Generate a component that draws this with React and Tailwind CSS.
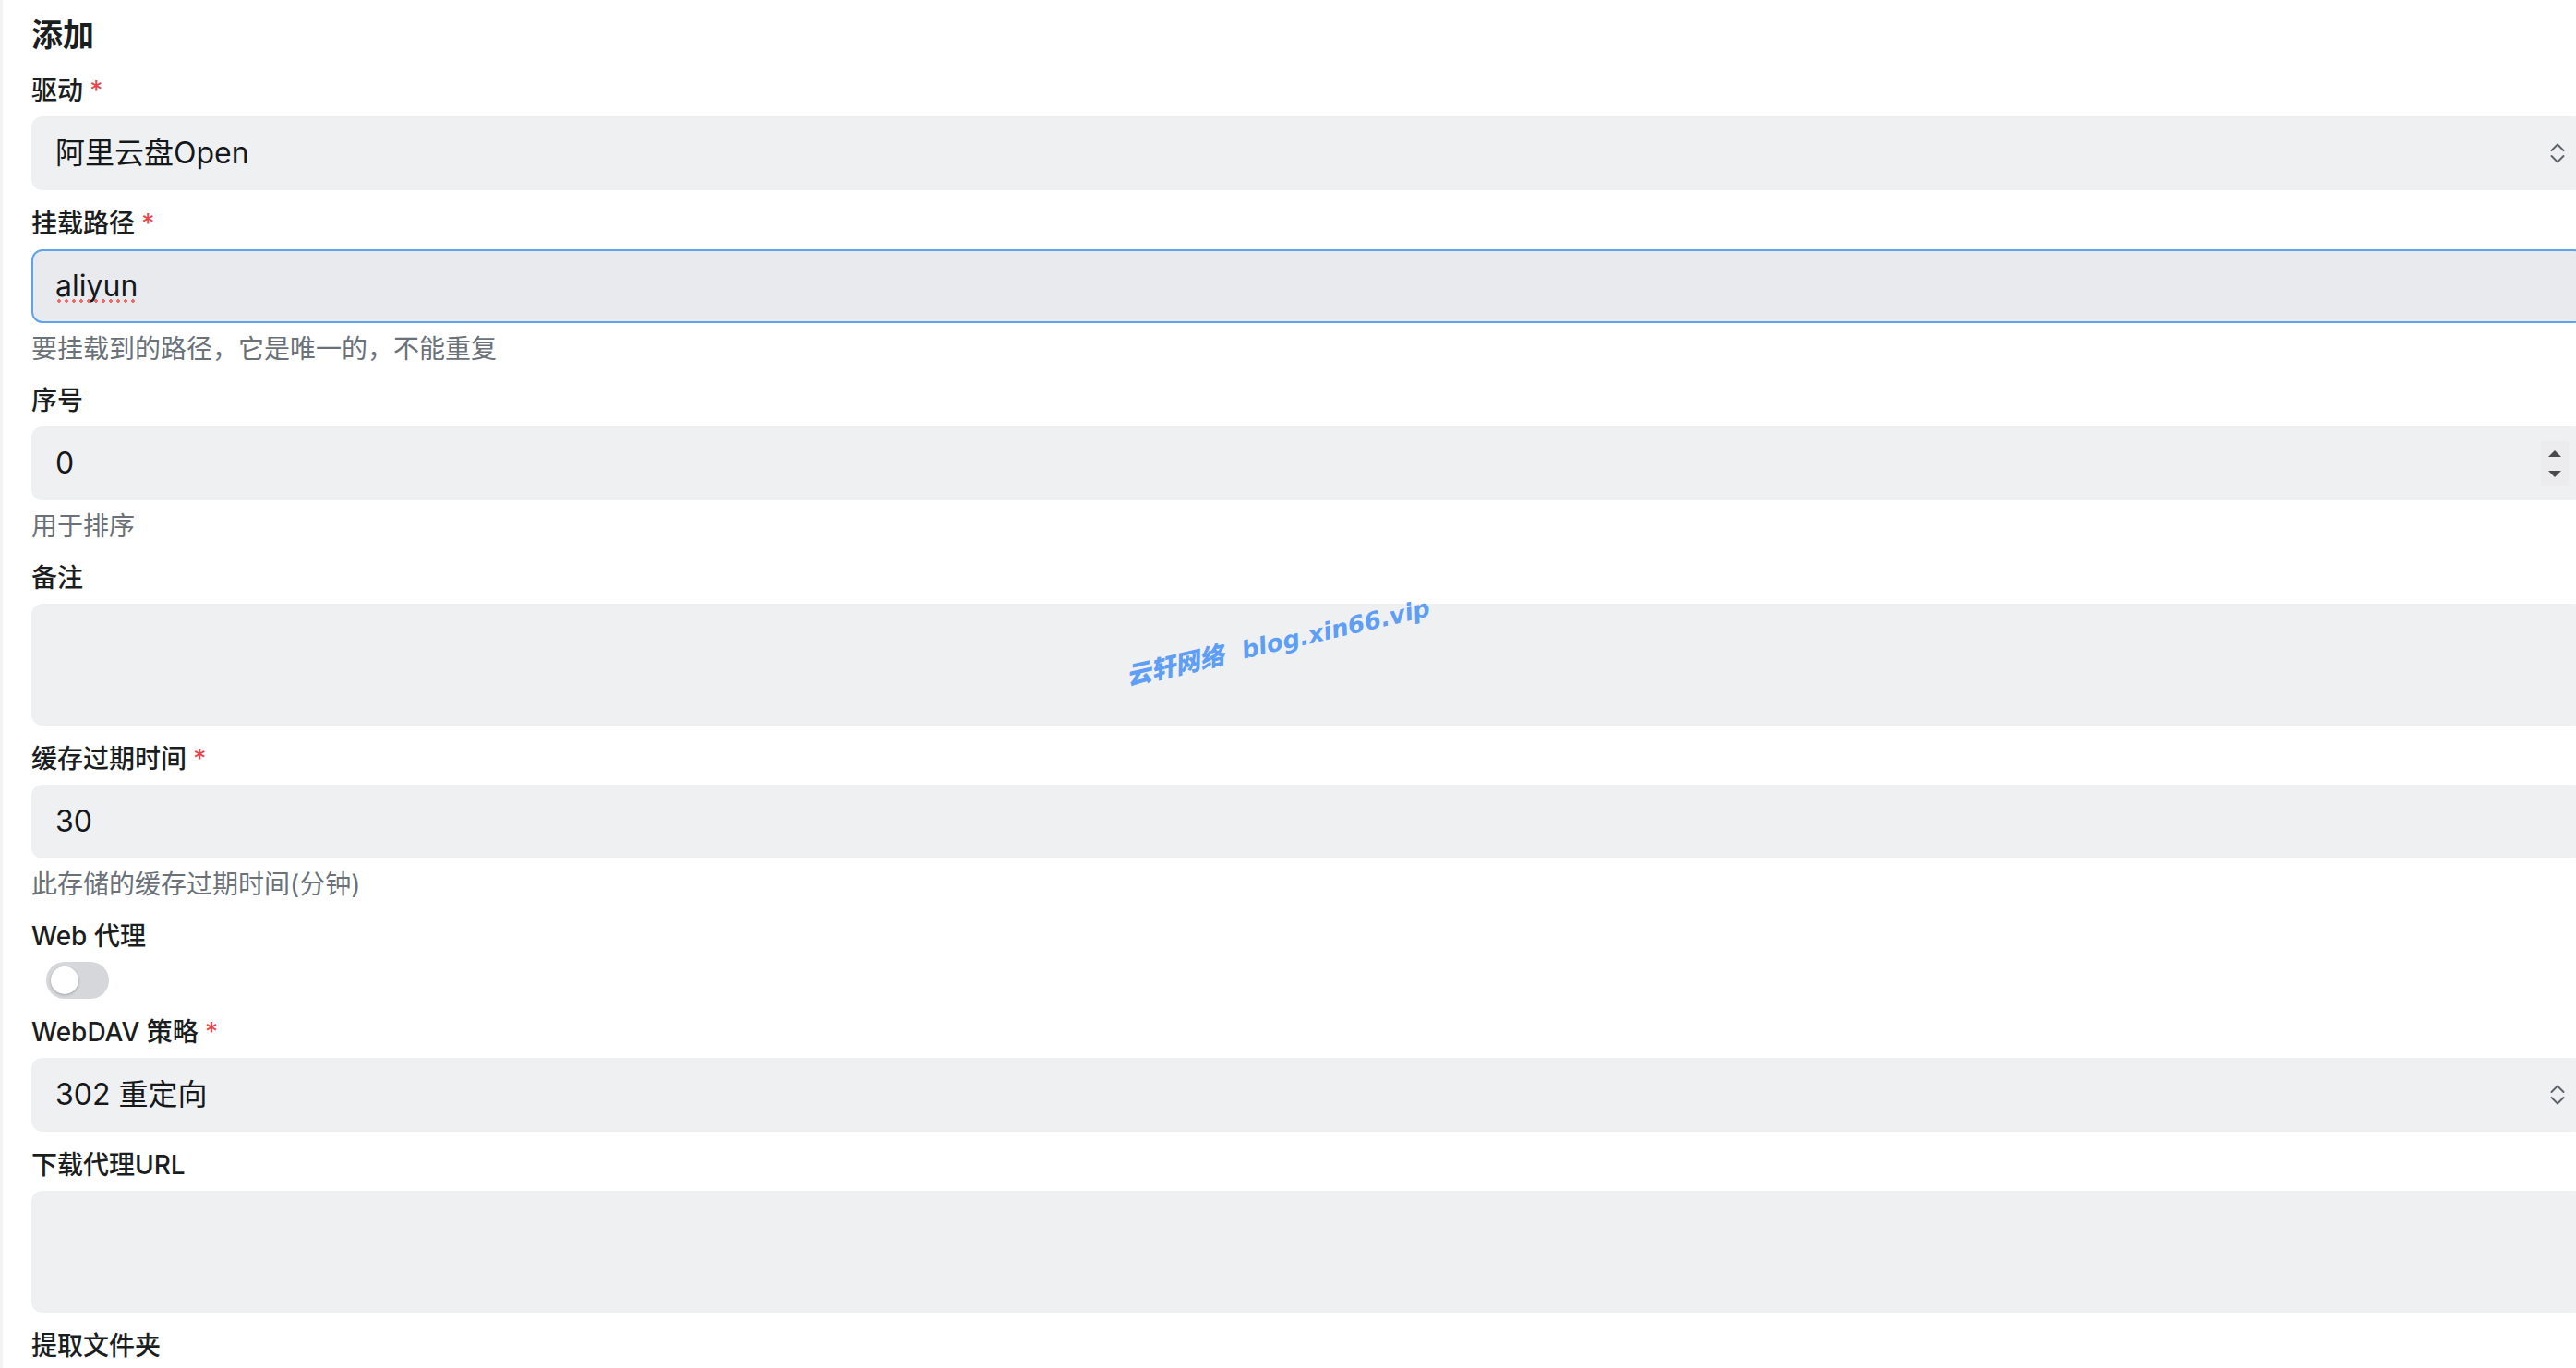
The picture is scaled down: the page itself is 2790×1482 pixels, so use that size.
import React from 'react';

// Required-field marker next to a label
const Required = () => <span className="ml-[7px] text-[#e5484d]">*</span>;

const Label = ({ children, required }) => (
    <div className="mb-2 text-[28px] leading-[40px] font-medium text-[#1b1e21]">
        {children}
        {required && <Required />}
    </div>
);

const Helper = ({ children }) => (
    <div className="mt-2 text-[28px] leading-[40px] text-[#6a7178]">{children}</div>
);

// Up/down chevrons shown at the right end of a select box
const SelectChevron = () => (
    <svg viewBox="0 0 16 24" className="h-[24px] w-[16px] shrink-0" fill="none" stroke="#5c636b" strokeWidth="2" strokeLinecap="round" strokeLinejoin="round" aria-hidden="true">
        <path d="M1.5 9L8 2.5L14.5 9" />
        <path d="M1.5 15L8 21.5L14.5 15" />
    </svg>
);

// Stepper arrows of the number input
const Spinner = () => (
    <div className="flex h-[48px] w-[30px] shrink-0 flex-col items-center justify-center gap-[15px] bg-[#ececee]">
        <svg viewBox="0 0 14 7" className="h-[7px] w-[14px]" aria-hidden="true">
            <path d="M0 7L7 0L14 7Z" fill="#4a4a4a" />
        </svg>
        <svg viewBox="0 0 14 7" className="h-[7px] w-[14px]" aria-hidden="true">
            <path d="M0 0L7 7L14 0Z" fill="#4a4a4a" />
        </svg>
    </div>
);

const fieldBase = 'flex h-[80px] w-[2766px] items-center rounded-[12px] bg-[#eff0f2] text-[32px] text-[#15181b]';

const Select = ({ value }) => (
    <div className={`${fieldBase} justify-between pl-[26px] pr-[22px]`}>
        <span>{value}</span>
        <SelectChevron />
    </div>
);

const TextInput = ({ value }) => (
    <div className={`${fieldBase} px-[26px]`}>
        <span>{value}</span>
    </div>
);

const NumberInput = ({ value }) => (
    <div className={`${fieldBase} justify-between pl-[26px] pr-[18px]`}>
        <span>{value}</span>
        <Spinner />
    </div>
);

const TextArea = () => <div className="h-[132px] w-[2766px] rounded-[12px] bg-[#eff0f2]" />;

// Focused text input; the value carries the browser's spell-check dots
const FocusedInput = ({ value }) => (
    <div className="flex h-[80px] w-[2766px] items-center rounded-[12px] border-2 border-[#5ea3ec] bg-[#e9eaee] px-[24px] text-[32px] text-[#15181b]">
        <span className="relative inline-block leading-[40px]">
            {value}
            <span className="absolute left-0 right-0 top-[34px] h-[4px] bg-[radial-gradient(circle,#f06a6a_1.6px,transparent_1.8px)] bg-[length:8px_4px] bg-repeat-x" />
        </span>
    </div>
);

const Toggle = ({ on = false }) => (
    <div className="ml-4 flex h-[40px] w-[68px] items-center rounded-full bg-[#d5d7db] px-[5px]">
        <div className={`h-[30px] w-[30px] rounded-full bg-white shadow-[0_1px_3px_rgba(0,0,0,0.25)] ${on ? 'ml-auto' : ''}`} />
    </div>
);

const Group = ({ children }) => <div className="flex flex-col">{children}</div>;

export default function App() {
    return (
        <div className="relative flex h-[1482px] w-[2790px] overflow-hidden bg-white font-['Inter','Noto_Sans_CJK_SC',sans-serif]">
            <div className="h-full w-[3px] shrink-0 bg-[#f3f3f4]" />
            <div className="flex flex-col gap-4 pl-[31px] pt-[14px]">
                <h2 className="text-[34px] leading-[48px] font-semibold text-[#1b1e21]">添加</h2>

                <Group>
                    <Label required>驱动</Label>
                    <Select value="阿里云盘Open" />
                </Group>

                <Group>
                    <Label required>挂载路径</Label>
                    <FocusedInput value="aliyun" />
                    <Helper>要挂载到的路径，它是唯一的，不能重复</Helper>
                </Group>

                <Group>
                    <Label>序号</Label>
                    <NumberInput value="0" />
                    <Helper>用于排序</Helper>
                </Group>

                <Group>
                    <Label>备注</Label>
                    <TextArea />
                </Group>

                <Group>
                    <Label required>缓存过期时间</Label>
                    <TextInput value="30" />
                    <Helper>此存储的缓存过期时间(分钟)</Helper>
                </Group>

                <Group>
                    <Label>Web 代理</Label>
                    <Toggle />
                </Group>

                <Group>
                    <Label required>WebDAV 策略</Label>
                    <Select value="302 重定向" />
                </Group>

                <Group>
                    <Label>下载代理URL</Label>
                    <TextArea />
                </Group>

                <Group>
                    <Label>提取文件夹</Label>
                </Group>
            </div>

            {/* Site watermark stamped across the page */}
            <div className="pointer-events-none absolute left-[1384px] top-[695px] -translate-x-1/2 -translate-y-1/2 -rotate-[13deg] whitespace-nowrap text-[#5e9ef5]">
                <span className="font-['Noto_Sans_CJK_SC',sans-serif] text-[27px] font-black italic">云轩网络</span>
                <span className="ml-5 font-['DejaVu_Sans',sans-serif] text-[26px] font-bold italic">blog.xin66.vip</span>
            </div>
        </div>
    );
}
